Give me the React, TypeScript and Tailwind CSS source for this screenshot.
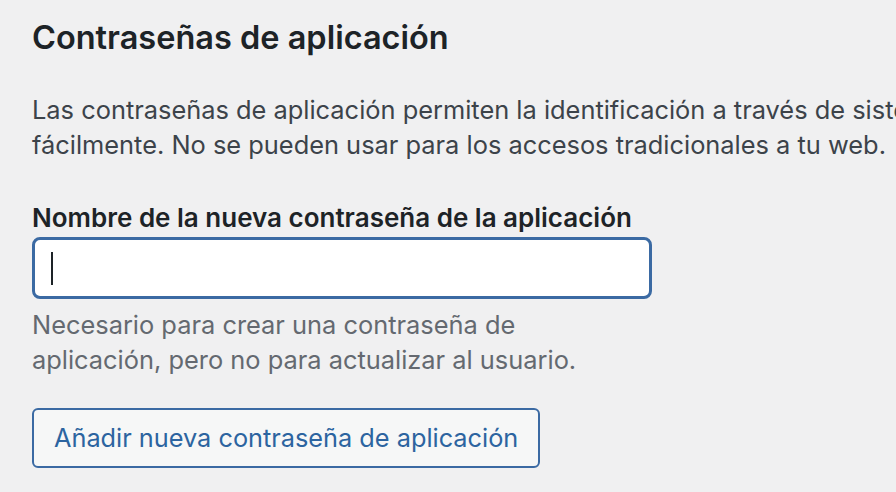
export default function App() {
  return (
    <div className="h-[492px] w-[896px] overflow-hidden bg-[#f0f0f1] pl-[32px] pt-[20px] font-['Inter','Liberation_Sans',sans-serif]">
      <h2 className="text-[32.5px] font-semibold leading-[36px] text-[#1d2327]">
        Contraseñas de aplicación
      </h2>

      <p className="mt-[36px] whitespace-nowrap text-[25.4px] leading-[35px] text-[#3c434a]">
        Las contraseñas de aplicación permiten la identificación a través de sistemas no interactivos, como XML-RPC o la API REST, sin proporcionar tu contraseña real. Las contraseñas de aplicación se pueden revocar
        <br />
        fácilmente. No se pueden usar para los accesos tradicionales a tu web.
      </p>

      <div className="mt-[41px] w-[620px]">
        <label className="block text-[26px] font-semibold leading-[30px] text-[#1d2327]">
          Nombre de la nueva contraseña de la aplicación
        </label>
        <div className="mt-[4px] flex h-[62px] items-center rounded-[8px] border-[3px] border-[#3b6aa3] bg-white pl-[16px]">
          {/* cursor */}
          <span className="h-[33px] w-[2px] bg-[#1d2327]" />
        </div>
        <p className="mt-[8px] w-[600px] text-[25.4px] leading-[35px] text-[#646970]">
          Necesario para crear una contraseña de aplicación, pero no para actualizar al usuario.
        </p>
      </div>

      <button
        type="button"
        className="mt-[31px] h-[60px] rounded-[6px] border-2 border-[#3b6aa3] bg-[#f6f7f7] px-[20px] text-[25.3px] text-[#2c64a0]"
      >
        Añadir nueva contraseña de aplicación
      </button>
    </div>
  );
}
